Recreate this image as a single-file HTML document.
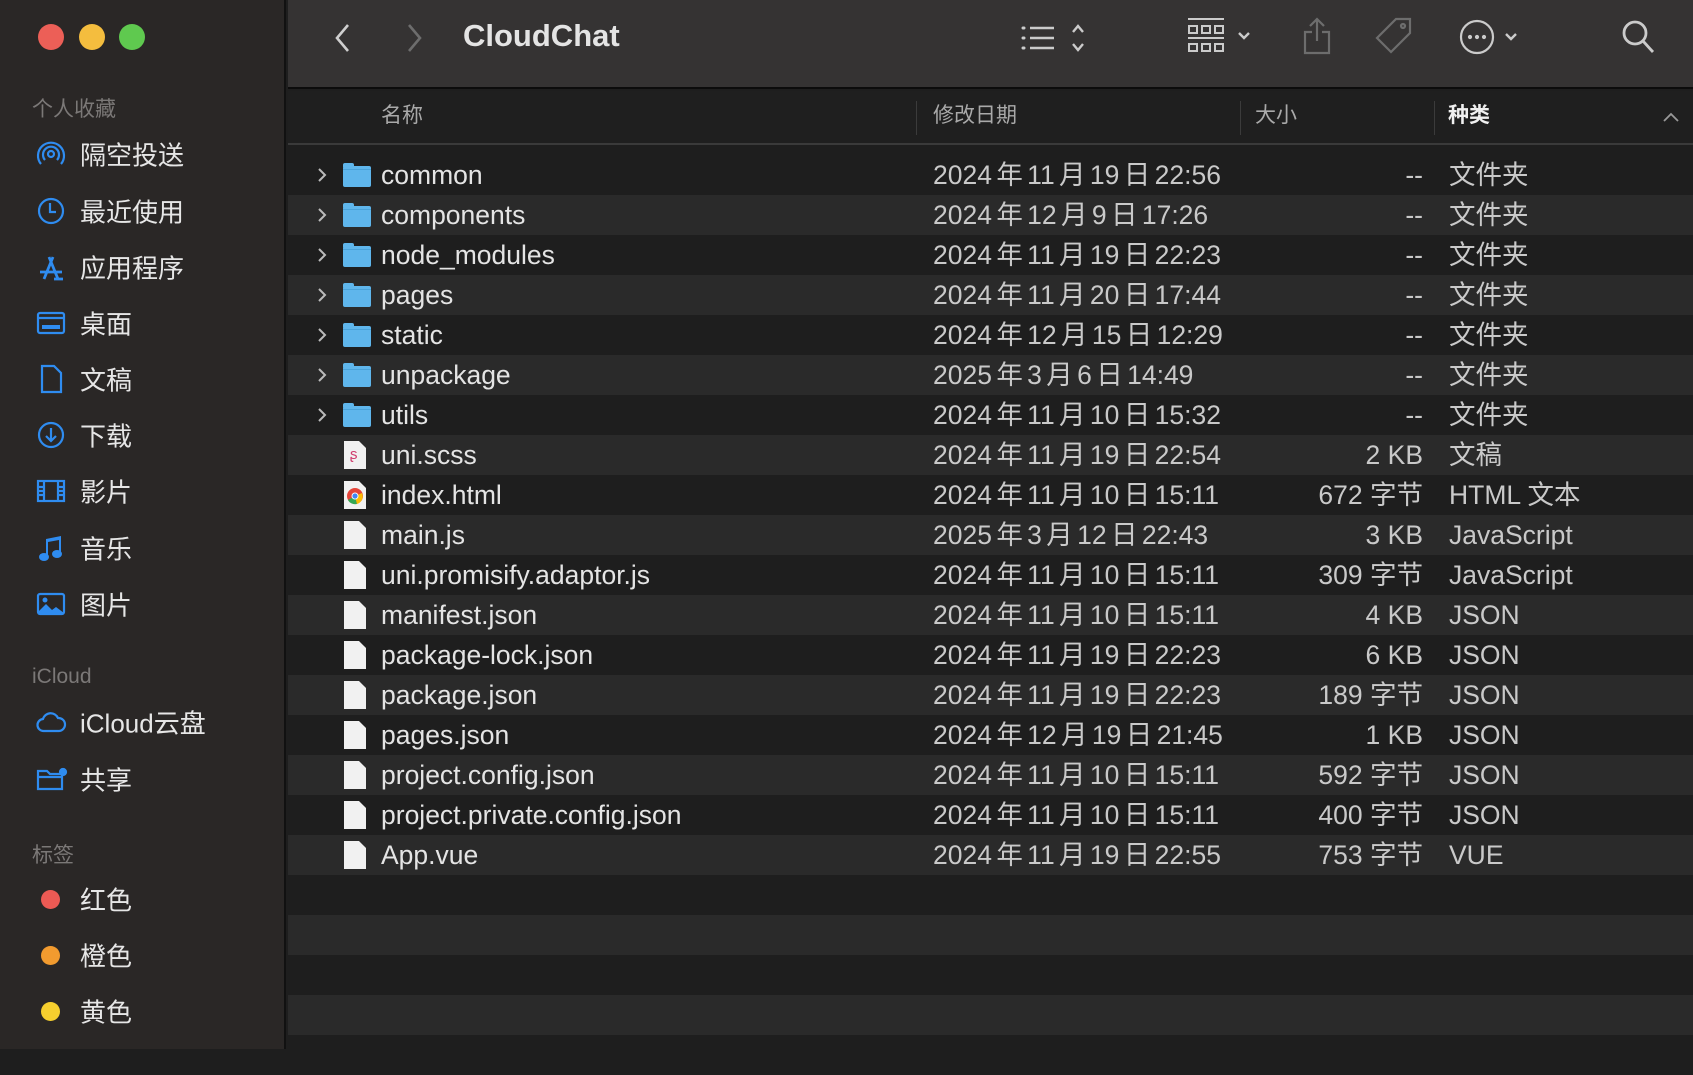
<!DOCTYPE html>
<html><head><meta charset="utf-8"><style>
*{margin:0;padding:0;box-sizing:border-box}
body{width:1693px;height:1049px;overflow:hidden;background:#1e1e1e;font-family:"Liberation Sans","Noto Sans CJK SC",sans-serif;position:relative;color:#dedede}
#side{position:absolute;left:0;top:0;width:286px;height:1049px;background:#2a2726;border-right:2px solid #111}
.dot{position:absolute;top:24px;width:26px;height:26px;border-radius:50%}
.sh{position:absolute;left:32px;font-size:21px;color:#7b7877}
.si{position:absolute;left:80px;font-size:26px;color:#e6e6e6;transform:translateY(-50%)}
.ic{position:absolute;left:35px;transform:translateY(-50%)}
#tb{position:absolute;left:288px;top:0;right:0;height:89px;background:#353333;border-bottom:2px solid #0c0c0c}
#hd{position:absolute;left:288px;top:91px;right:0;height:54px;background:#1f1f1f;border-bottom:2px solid #3a3a3a;font-size:21px;color:#a9a9a9}
#hd span{position:absolute;top:0;line-height:50px}
.div{position:absolute;top:10px;width:1px;height:34px;background:#3b3b3b}
.r{position:absolute;left:288px;right:0;height:40px;font-size:26.5px}
.r.l{background:#2a2a2a}
.r span{position:absolute;top:0;line-height:40px;white-space:nowrap}
.n{left:93px;color:#e4e4e4}
.d{left:645px;color:#c9c9c9;word-spacing:-3px}
.s{right:270px;color:#c9c9c9}
.k{left:1161px;color:#c9c9c9}
.ch{position:absolute;left:28px;top:12px}
.fo{position:absolute;left:55px;top:11px;width:28px;height:21px;background:#5fb6ec;border-radius:2px}
.fo:before{content:"";position:absolute;left:0;top:-3px;width:11px;height:4px;background:#5fb6ec;border-radius:2px 2px 0 0}
.fo:after{content:"";position:absolute;left:0;top:3px;width:28px;height:1px;background:#4aa3da}
.fi{position:absolute;left:56px;top:6px;width:22px;height:28px;background:#f1f1f1;clip-path:polygon(0 0,68% 0,100% 25%,100% 100%,0 100%)}
</style></head><body>
<div id="side">
<div class="dot" style="left:38px;background:#ec5f57"></div>
<div class="dot" style="left:79px;background:#f4bd3e"></div>
<div class="dot" style="left:119px;background:#5fc94f"></div>
<div class="sh" style="top:93px">个人收藏</div>
<svg class="ic" style="top:154px" width="32" height="32" viewBox="0 0 32 32" fill="none" stroke="#2f8cf0" stroke-width="2.2"><circle cx="16" cy="16" r="3"/><path d="M10 22a8 8 0 1 1 12 0M6 26a13 13 0 1 1 20 0"/></svg>
<div class="si" style="top:154px">隔空投送</div>
<svg class="ic" style="top:211px" width="32" height="32" viewBox="0 0 32 32" fill="none" stroke="#2f8cf0" stroke-width="2.2"><circle cx="16" cy="16" r="12"/><path d="M15 8v9h6"/></svg>
<div class="si" style="top:211px">最近使用</div>
<svg class="ic" style="top:267px" width="32" height="32" viewBox="0 0 32 32" fill="none" stroke="#2f8cf0" stroke-width="2.8"><path d="M9 28l9-22M23 28l-9-22M5 21h22M19 28h9"/></svg>
<div class="si" style="top:267px">应用程序</div>
<svg class="ic" style="top:323px" width="32" height="32" viewBox="0 0 32 32" fill="none" stroke="#2f8cf0" stroke-width="2.2"><rect x="3" y="6" width="26" height="20" rx="2"/><path d="M3 11h26"/><path d="M7 20h18" stroke-width="4"/></svg>
<div class="si" style="top:323px">桌面</div>
<svg class="ic" style="top:379px" width="32" height="32" viewBox="0 0 32 32" fill="none" stroke="#2f8cf0" stroke-width="2.2"><path d="M7 3h12l7 7v19H7z"/></svg>
<div class="si" style="top:379px">文稿</div>
<svg class="ic" style="top:435px" width="32" height="32" viewBox="0 0 32 32" fill="none" stroke="#2f8cf0" stroke-width="2.2"><circle cx="16" cy="16" r="12"/><path d="M16 9v13M11 17l5 5 5-5"/></svg>
<div class="si" style="top:435px">下载</div>
<svg class="ic" style="top:491px" width="32" height="32" viewBox="0 0 32 32" fill="none" stroke="#2f8cf0" stroke-width="2.2"><rect x="3" y="6" width="26" height="20"/><path d="M9 6v20M23 6v20M3 12h6M3 16h6M3 20h6M23 12h6M23 16h6M23 20h6"/></svg>
<div class="si" style="top:491px">影片</div>
<svg class="ic" style="top:548px" width="32" height="32" viewBox="0 0 32 32" fill="#2f8cf0"><path d="M11 7l15-3v18h-2V8l-11 2v15h-2z"/><ellipse cx="9" cy="25" rx="5" ry="4"/><ellipse cx="22" cy="22" rx="5" ry="4"/></svg>
<div class="si" style="top:548px">音乐</div>
<svg class="ic" style="top:604px" width="32" height="32" viewBox="0 0 32 32"><rect x="3" y="6" width="26" height="20" rx="2" fill="none" stroke="#2f8cf0" stroke-width="2.2"/><path d="M3 24l8-8 6 6 4-3 8 6v1H3z" fill="#2f8cf0"/><circle cx="10" cy="12" r="2.5" fill="#2f8cf0"/></svg>
<div class="si" style="top:604px">图片</div>
<div class="sh" style="top:665px">iCloud</div>
<svg class="ic" style="top:722px" width="32" height="32" viewBox="0 0 32 32" fill="none" stroke="#2f8cf0" stroke-width="2.2"><path d="M9 25a6 6 0 0 1-1-12 8 8 0 0 1 15-1 6.5 6.5 0 0 1 1 13z"/></svg>
<div class="si" style="top:722px">iCloud云盘</div>
<svg class="ic" style="top:779px" width="34" height="32" viewBox="0 0 34 32" fill="none" stroke="#2f8cf0" stroke-width="2.2"><path d="M3 8h9l3 3h12v15H3z"/><path d="M3 14h24"/><circle cx="28" cy="9" r="3" fill="#2f8cf0"/></svg>
<div class="si" style="top:779px">共享</div>
<div class="sh" style="top:839px">标签</div>
<div class="dot" style="left:41px;top:890px;width:19px;height:19px;background:#ec5a54"></div><div class="si" style="top:899px">红色</div>
<div class="dot" style="left:41px;top:946px;width:19px;height:19px;background:#f29b2f"></div><div class="si" style="top:955px">橙色</div>
<div class="dot" style="left:41px;top:1002px;width:19px;height:19px;background:#f6cf2e"></div><div class="si" style="top:1011px">黄色</div>
</div>

<div id="tb">
<svg style="position:absolute;left:43px;top:22px" width="24" height="32" viewBox="0 0 24 32" fill="none" stroke="#cfcfcf" stroke-width="2.6"><path d="M17 3L6 16l11 13"/></svg>
<svg style="position:absolute;left:114px;top:22px" width="24" height="32" viewBox="0 0 24 32" fill="none" stroke="#6d6d6d" stroke-width="2.6"><path d="M7 3l11 13L7 29"/></svg>
<div style="position:absolute;left:175px;top:18px;font-size:31px;font-weight:bold;color:#e4e4e4">CloudChat</div>
<svg style="position:absolute;left:733px;top:22px" width="70" height="32" viewBox="0 0 70 32" fill="none" stroke="#cbcbcb" stroke-width="2.4"><path d="M9 6h24M9 16h24M9 26h24"/><path d="M2 6h1M2 16h1M2 26h1" stroke-width="3" stroke-linecap="round"/><path d="M52 10l5-6 5 6M52 22l5 6 5-6"/></svg>
<svg style="position:absolute;left:898px;top:16px" width="70" height="40" viewBox="0 0 70 40" fill="none" stroke="#cbcbcb" stroke-width="2"><path d="M2 3h36M2 22h36"/><rect x="3" y="10" width="8" height="7"/><rect x="16" y="10" width="8" height="7"/><rect x="29" y="10" width="8" height="7"/><rect x="3" y="28" width="8" height="7"/><rect x="16" y="28" width="8" height="7"/><rect x="29" y="28" width="8" height="7"/><path d="M53 17l5 5 5-5" stroke-width="2.4"/></svg>
<svg style="position:absolute;left:1013px;top:16px" width="32" height="40" viewBox="0 0 32 40" fill="none" stroke="#6d6d6d" stroke-width="2.2"><path d="M16 25V3M9 10l7-7 7 7M11 16H4v21h24V16h-7"/></svg>
<svg style="position:absolute;left:1086px;top:16px" width="40" height="40" viewBox="0 0 40 40" fill="none" stroke="#6d6d6d" stroke-width="2.2"><path d="M22 3h14v14L17 36 3 22z"/><circle cx="29" cy="10" r="2"/></svg>
<svg style="position:absolute;left:1170px;top:18px" width="70" height="38" viewBox="0 0 70 38" fill="none" stroke="#cbcbcb" stroke-width="2.2"><circle cx="19" cy="19" r="16"/><circle cx="12" cy="19" r="1" fill="#cbcbcb"/><circle cx="19" cy="19" r="1" fill="#cbcbcb"/><circle cx="26" cy="19" r="1" fill="#cbcbcb"/><path d="M48 16l5 5 5-5" stroke-width="2.4"/></svg>
<svg style="position:absolute;left:1333px;top:18px" width="36" height="38" viewBox="0 0 36 38" fill="none" stroke="#cbcbcb" stroke-width="2.8"><circle cx="14" cy="15" r="11"/><path d="M22 23l10 11"/></svg>
</div>

<div id="hd">
<span style="left:93px">名称</span>
<div class="div" style="left:628px"></div><span style="left:645px">修改日期</span>
<div class="div" style="left:952px"></div><span style="left:967px">大小</span>
<div class="div" style="left:1146px"></div><span style="left:1160px;color:#f0f0f0;font-weight:bold">种类</span>
<svg style="position:absolute;left:1374px;top:20px" width="18" height="12" viewBox="0 0 18 12" fill="none" stroke="#999" stroke-width="1.8"><path d="M2 10l7-7 7 7"/></svg>
</div>

<div class="r" style="top:155px"><svg class="ch" width="12" height="16" viewBox="0 0 12 16" fill="none" stroke="#bbb" stroke-width="2"><path d="M3 2l6 6-6 6"/></svg><div class="fo"></div><span class="n">common</span><span class="d">2024 年 11 月 19 日 22:56</span><span class="s">--</span><span class="k">文件夹</span></div>
<div class="r l" style="top:195px"><svg class="ch" width="12" height="16" viewBox="0 0 12 16" fill="none" stroke="#bbb" stroke-width="2"><path d="M3 2l6 6-6 6"/></svg><div class="fo"></div><span class="n">components</span><span class="d">2024 年 12 月 9 日 17:26</span><span class="s">--</span><span class="k">文件夹</span></div>
<div class="r" style="top:235px"><svg class="ch" width="12" height="16" viewBox="0 0 12 16" fill="none" stroke="#bbb" stroke-width="2"><path d="M3 2l6 6-6 6"/></svg><div class="fo"></div><span class="n">node_modules</span><span class="d">2024 年 11 月 19 日 22:23</span><span class="s">--</span><span class="k">文件夹</span></div>
<div class="r l" style="top:275px"><svg class="ch" width="12" height="16" viewBox="0 0 12 16" fill="none" stroke="#bbb" stroke-width="2"><path d="M3 2l6 6-6 6"/></svg><div class="fo"></div><span class="n">pages</span><span class="d">2024 年 11 月 20 日 17:44</span><span class="s">--</span><span class="k">文件夹</span></div>
<div class="r" style="top:315px"><svg class="ch" width="12" height="16" viewBox="0 0 12 16" fill="none" stroke="#bbb" stroke-width="2"><path d="M3 2l6 6-6 6"/></svg><div class="fo"></div><span class="n">static</span><span class="d">2024 年 12 月 15 日 12:29</span><span class="s">--</span><span class="k">文件夹</span></div>
<div class="r l" style="top:355px"><svg class="ch" width="12" height="16" viewBox="0 0 12 16" fill="none" stroke="#bbb" stroke-width="2"><path d="M3 2l6 6-6 6"/></svg><div class="fo"></div><span class="n">unpackage</span><span class="d">2025 年 3 月 6 日 14:49</span><span class="s">--</span><span class="k">文件夹</span></div>
<div class="r" style="top:395px"><svg class="ch" width="12" height="16" viewBox="0 0 12 16" fill="none" stroke="#bbb" stroke-width="2"><path d="M3 2l6 6-6 6"/></svg><div class="fo"></div><span class="n">utils</span><span class="d">2024 年 11 月 10 日 15:32</span><span class="s">--</span><span class="k">文件夹</span></div>
<div class="r l" style="top:435px"><div class="fi"></div><span style="left:62px;color:#d04070;font-size:15px">ʂ</span><span class="n">uni.scss</span><span class="d">2024 年 11 月 19 日 22:54</span><span class="s">2 KB</span><span class="k">文稿</span></div>
<div class="r" style="top:475px"><div class="fi"></div><svg style="position:absolute;left:58px;top:12px" width="18" height="18" viewBox="0 0 18 18"><circle cx="9" cy="9" r="8" fill="#e5453a"/><path d="M9 9L2 13a8 8 0 0 0 9 4z" fill="#34a853"/><path d="M9 9l7-3a8 8 0 0 1-5 11z" fill="#fbbc05"/><circle cx="9" cy="9" r="3.5" fill="#fff"/><circle cx="9" cy="9" r="2.6" fill="#4285f4"/></svg><span class="n">index.html</span><span class="d">2024 年 11 月 10 日 15:11</span><span class="s">672 字节</span><span class="k">HTML 文本</span></div>
<div class="r l" style="top:515px"><div class="fi"></div><span class="n">main.js</span><span class="d">2025 年 3 月 12 日 22:43</span><span class="s">3 KB</span><span class="k">JavaScript</span></div>
<div class="r" style="top:555px"><div class="fi"></div><span class="n">uni.promisify.adaptor.js</span><span class="d">2024 年 11 月 10 日 15:11</span><span class="s">309 字节</span><span class="k">JavaScript</span></div>
<div class="r l" style="top:595px"><div class="fi"></div><span class="n">manifest.json</span><span class="d">2024 年 11 月 10 日 15:11</span><span class="s">4 KB</span><span class="k">JSON</span></div>
<div class="r" style="top:635px"><div class="fi"></div><span class="n">package-lock.json</span><span class="d">2024 年 11 月 19 日 22:23</span><span class="s">6 KB</span><span class="k">JSON</span></div>
<div class="r l" style="top:675px"><div class="fi"></div><span class="n">package.json</span><span class="d">2024 年 11 月 19 日 22:23</span><span class="s">189 字节</span><span class="k">JSON</span></div>
<div class="r" style="top:715px"><div class="fi"></div><span class="n">pages.json</span><span class="d">2024 年 12 月 19 日 21:45</span><span class="s">1 KB</span><span class="k">JSON</span></div>
<div class="r l" style="top:755px"><div class="fi"></div><span class="n">project.config.json</span><span class="d">2024 年 11 月 10 日 15:11</span><span class="s">592 字节</span><span class="k">JSON</span></div>
<div class="r" style="top:795px"><div class="fi"></div><span class="n">project.private.config.json</span><span class="d">2024 年 11 月 10 日 15:11</span><span class="s">400 字节</span><span class="k">JSON</span></div>
<div class="r l" style="top:835px"><div class="fi"></div><span class="n">App.vue</span><span class="d">2024 年 11 月 19 日 22:55</span><span class="s">753 字节</span><span class="k">VUE</span></div>
<div class="r" style="top:875px"></div>
<div class="r l" style="top:915px"></div>
<div class="r" style="top:955px"></div>
<div class="r l" style="top:995px"></div>
<div class="r" style="top:1035px"></div>
</body></html>
